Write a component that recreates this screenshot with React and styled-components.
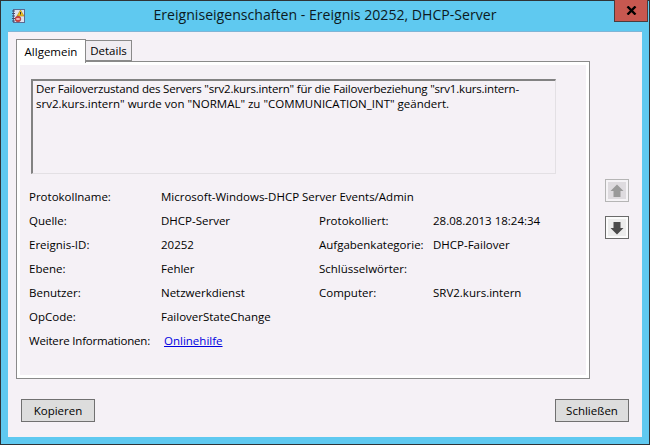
import React from 'react';
import styled, { createGlobalStyle } from 'styled-components';

const GlobalStyle = createGlobalStyle`
  html, body {
    margin: 0;
    padding: 0;
    background: #5fc9f0;
  }
  body {
    font-family: "Open Sans", "Noto Sans", "Liberation Sans", sans-serif;
    font-size: 11.5px;
    color: #000;
  }
`;

const Frame = styled.div`
  box-sizing: border-box;
  width: 650px;
  height: 445px;
  display: flex;
  flex-direction: column;
  background: #5fc9f0;
  border: 1px solid #2f3336;
  padding: 0 7px 7px;
  position: relative;
`;

const TitleBar = styled.div`
  height: 30px;
  flex: none;
  display: flex;
  align-items: center;
  justify-content: center;
  position: relative;
`;

const AppIcon = styled.svg`
  position: absolute;
  left: 3px;
  top: 7px;
`;

const TitleText = styled.div`
  font-size: 14.1px;
  color: #0c1a22;
  margin-top: -3px;
`;

const CloseButton = styled.div`
  box-sizing: border-box;
  position: absolute;
  top: -1px;
  right: -6px;
  width: 34px;
  height: 22px;
  background: #c75850;
  border: 1px solid #4a3c3e;
  border-top: none;
  display: flex;
  align-items: center;
  justify-content: center;
`;

const Body = styled.div`
  flex: 1;
  display: flex;
  flex-direction: column;
  background: #f5f1f6;
  border-top: 1px solid #7fb5d6;
  padding: 7px 13px 13px 8px;
  min-height: 0;
`;

const MainRow = styled.div`
  display: flex;
  align-items: stretch;
  height: 340px;
`;

const TabArea = styled.div`
  width: 574px;
  display: flex;
  flex-direction: column;
`;

const TabStrip = styled.div`
  display: flex;
  align-items: flex-end;
  height: 22px;
  position: relative;
  z-index: 1;
`;

const Tab = styled.div`
  box-sizing: border-box;
  border: 1px solid #8a8a8a;
  display: flex;
  align-items: center;
  justify-content: center;
  ${({ $active }) =>
    $active
      ? `
    width: 70px;
    height: 24px;
    background: #fff;
    border-bottom: none;
    margin-bottom: -2px;
  `
      : `
    width: 46px;
    height: 21px;
    background: #f0edf1;
    border-left: none;
    margin-bottom: 0;
  `}
`;

const Panel = styled.div`
  flex: 1;
  box-sizing: border-box;
  border: 1px solid #8a8a8a;
  background: #f5f1f6;
  box-shadow: inset 0 0 0 3px #fff;
  padding: 17px 12px 0 12px;
  display: flex;
  flex-direction: column;
`;

const MessageBox = styled.div`
  box-sizing: border-box;
  width: 525px;
  height: 95px;
  margin-left: 2px;
  border-top: 2px solid #828282;
  border-left: 2px solid #828282;
  border-right: 1px solid #e3e0e4;
  border-bottom: 1px solid #e3e0e4;
  padding: 0 3px;
  line-height: 15px;
`;

const MessageLine = styled.div`
  white-space: nowrap;
  letter-spacing: ${({ $tight }) => ($tight ? '-0.2px' : '0')};
`;

const InfoGrid = styled.div`
  display: grid;
  grid-template-columns: 132px 158px 114px 1fr;
  grid-auto-rows: 24px;
  align-items: center;
  margin-top: 10px;
`;

const WideValue = styled.div`
  grid-column: 2 / 5;
`;

const LinkRow = styled.div`
  grid-column: 1 / 5;
  display: flex;
  gap: 14px;
`;

const LinkLabel = styled.div`
  letter-spacing: -0.18px;
`;

const HelpLink = styled.a`
  color: #0000e0;
  text-decoration: underline;
`;

const SideColumn = styled.div`
  flex: 1;
  display: flex;
  flex-direction: column;
  align-items: flex-start;
  gap: 14px;
  padding: 140px 0 0 15px;
`;

const ArrowButton = styled.div`
  box-sizing: border-box;
  width: 24px;
  height: 23px;
  display: flex;
  align-items: center;
  justify-content: center;
  background: ${({ $disabled }) => ($disabled ? '#dedbdf' : '#ececec')};
  border: 1px solid ${({ $disabled }) => ($disabled ? '#b5b5b5' : '#6a6a6a')};
  box-shadow: inset 0 0 0 2px ${({ $disabled }) => ($disabled ? '#f5f3f6' : '#fbfbfb')};
`;

const Footer = styled.div`
  display: flex;
  justify-content: space-between;
  padding: 20px 0 0 5px;
`;

const FooterButton = styled.button`
  box-sizing: border-box;
  width: 74px;
  height: 23px;
  background: #dddddd;
  border: 1px solid #707070;
  font: inherit;
  color: #000;
  padding: 0;
`;

const NotebookIcon = () => (
  <AppIcon width="16" height="16" viewBox="0 0 16 16">
    <rect x="2.500" y="1.500" width="11" height="13" fill="#dfe2ee" stroke="#5a6a92" />
    <path d="M1 3h3M1 5.500h3M1 8h3M1 10.500h3M1 13h3" stroke="#444e6e" strokeWidth="1" />
    <path d="M9.500 2 L13 8 H6 Z" fill="#f2c21a" stroke="#a98612" strokeWidth="0.6" />
    <rect x="9" y="4" width="1" height="2.500" fill="#333" />
    <circle cx="7" cy="11" r="2.800" fill="#d2423e" stroke="#9a2a28" strokeWidth="0.6" />
    <rect x="5.300" y="10.400" width="3.400" height="1.200" fill="#fff" />
  </AppIcon>
);

const CloseGlyph = () => (
  <svg width="11" height="9" viewBox="0 0 11 9">
    <path d="M1.500 0.500 L9.500 8.500 M9.500 0.500 L1.500 8.500" stroke="#000" strokeWidth="2.400" />
  </svg>
);

const Arrow = ({ down, color }) => (
  <svg width="14" height="14" viewBox="0 0 14 14">
    <path
      d={down ? 'M3.500 1h7v6h3L7 13.500.5 7h3z' : 'M3.500 13h7V7h3L7 .5.5 7h3z'}
      fill={color}
    />
  </svg>
);

const rows = [
  ['Quelle:', 'DHCP-Server', 'Protokolliert:', '28.08.2013 18:24:34'],
  ['Ereignis-ID:', '20252', 'Aufgabenkategorie:', 'DHCP-Failover'],
  ['Ebene:', 'Fehler', 'Schlüsselwörter:', ''],
  ['Benutzer:', 'Netzwerkdienst', 'Computer:', 'SRV2.kurs.intern'],
  ['OpCode:', 'FailoverStateChange', '', ''],
];

export default function App() {
  return (
    <>
      <GlobalStyle />
      <Frame>
        <TitleBar>
          <NotebookIcon />
          <TitleText>Ereigniseigenschaften - Ereignis 20252, DHCP-Server</TitleText>
          <CloseButton>
            <CloseGlyph />
          </CloseButton>
        </TitleBar>
        <Body>
          <MainRow>
            <TabArea>
              <TabStrip>
                <Tab $active>Allgemein</Tab>
                <Tab>Details</Tab>
              </TabStrip>
              <Panel>
                <MessageBox>
                  <MessageLine $tight>
                    Der Failoverzustand des Servers "srv2.kurs.intern" für die Failoverbeziehung "srv1.kurs.intern-
                  </MessageLine>
                  <MessageLine>
                    srv2.kurs.intern" wurde von "NORMAL" zu "COMMUNICATION_INT" geändert.
                  </MessageLine>
                </MessageBox>
                <InfoGrid>
                  <div>Protokollname:</div>
                  <WideValue>Microsoft-Windows-DHCP Server Events/Admin</WideValue>
                  {rows.map((row) =>
                    row.map((cell, i) => <div key={row[0] + i}>{cell}</div>)
                  )}
                  <LinkRow>
                    <LinkLabel>Weitere Informationen:</LinkLabel>
                    <HelpLink href="#">Onlinehilfe</HelpLink>
                  </LinkRow>
                </InfoGrid>
              </Panel>
            </TabArea>
            <SideColumn>
              <ArrowButton $disabled>
                <Arrow color="#9a9a9a" />
              </ArrowButton>
              <ArrowButton>
                <Arrow down color="#4a4a4a" />
              </ArrowButton>
            </SideColumn>
          </MainRow>
          <Footer>
            <FooterButton>Kopieren</FooterButton>
            <FooterButton>Schließen</FooterButton>
          </Footer>
        </Body>
      </Frame>
    </>
  );
}
